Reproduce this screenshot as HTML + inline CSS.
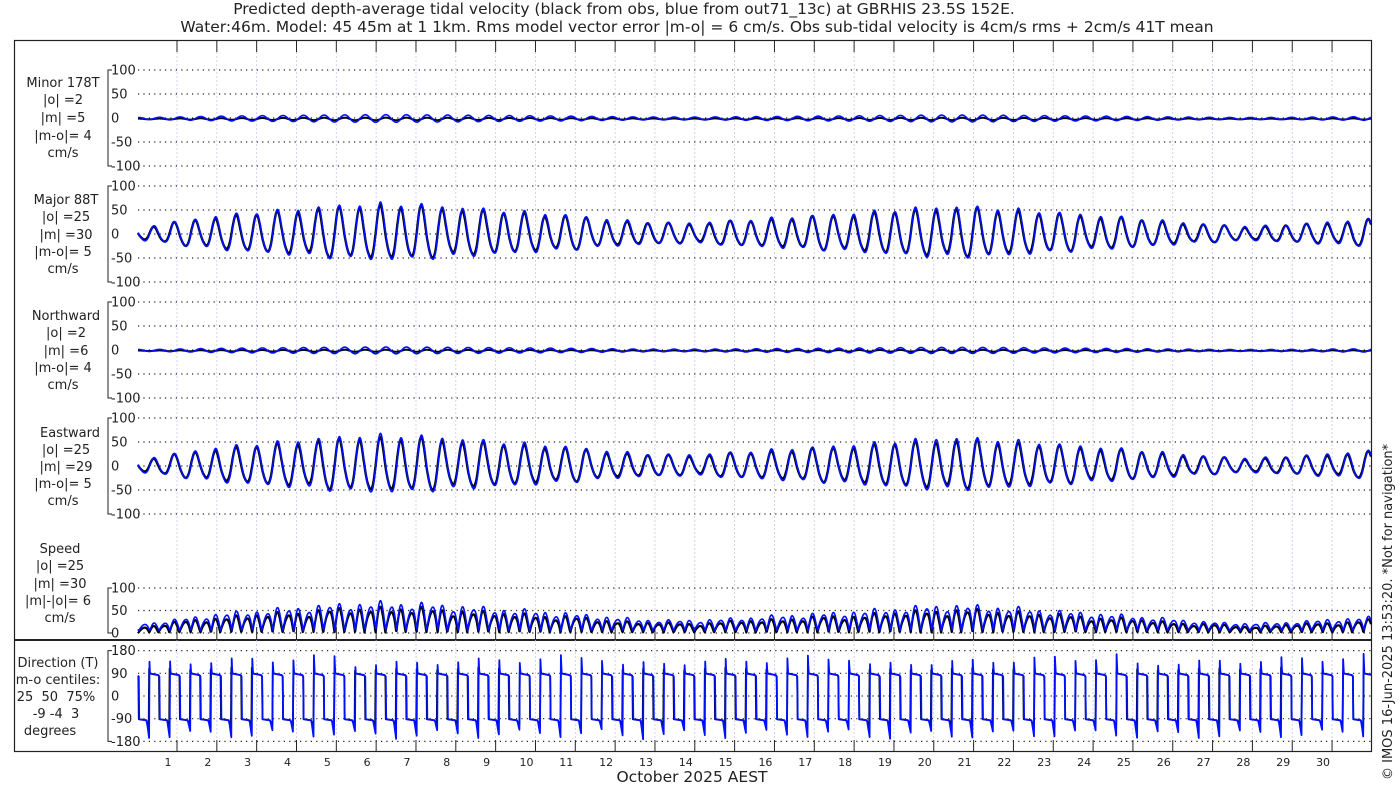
<!DOCTYPE html>
<html><head><meta charset="utf-8"><style>
html,body{margin:0;padding:0;background:#fff;width:1400px;height:800px;overflow:hidden}
svg{display:block}
text{font-family:"DejaVu Sans","Liberation Sans",sans-serif;fill:#222;white-space:pre}
</style></head><body>
<svg id="s" width="1400" height="800" xmlns="http://www.w3.org/2000/svg">
<text x="624" y="14" font-size="15.5" text-anchor="middle">Predicted depth-average tidal velocity (black from obs, blue from out71_13c) at GBRHIS 23.5S 152E.</text>
<text x="697" y="32" font-size="15.5" text-anchor="middle">Water:46m. Model: 45 45m at 1 1km. Rms model vector error |m-o| = 6 cm/s. Obs sub-tidal velocity is 4cm/s rms + 2cm/s 41T mean</text>
<rect x="14.5" y="40.5" width="1357" height="711" fill="none" stroke="#222" stroke-width="1.2"/>
<line x1="14" y1="640" x2="1372" y2="640" stroke="#222" stroke-width="2"/>
<g id="grid"></g>
<g id="data" fill="none"></g>
<g font-size="13" text-anchor="middle">
<text x="63" y="87">Minor 178T</text><text x="63" y="104">|o| =2</text><text x="63" y="122">|m| =5</text><text x="63" y="140">|m-o|= 4</text><text x="63" y="157">cm/s</text>
<text x="66" y="204">Major 88T</text><text x="66" y="221">|o| =25</text><text x="66" y="239">|m| =30</text><text x="63" y="256">|m-o|= 5</text><text x="63" y="273">cm/s</text>
<text x="66" y="320">Northward</text><text x="66" y="337">|o| =2</text><text x="66" y="355">|m| =6</text><text x="63" y="372">|m-o|= 4</text><text x="63" y="389">cm/s</text>
<text x="70" y="437">Eastward</text><text x="66" y="454">|o| =25</text><text x="66" y="471">|m| =29</text><text x="63" y="488">|m-o|= 5</text><text x="63" y="505">cm/s</text>
<text x="60" y="553">Speed</text><text x="60" y="570">|o| =25</text><text x="60" y="588">|m| =30</text><text x="58" y="605">|m|-|o|= 6</text><text x="60" y="622">cm/s</text>
<text x="58" y="667">Direction (T)</text><text x="58" y="684">m-o centiles:</text><text x="56" y="701" xml:space="preserve">25  50  75%</text><text x="56" y="718" xml:space="preserve">-9 -4  3</text><text x="50" y="735">degrees</text>
</g>
<text x="692" y="782" font-size="15.5" text-anchor="middle">October 2025 AEST</text>
<text transform="translate(1392,780) rotate(-90)" font-size="13">© IMOS 16-Jun-2025 13:53:20. *Not for navigation*</text>
<g id="ax" font-size="13"></g>
</svg>
<script>
var NS="http://www.w3.org/2000/svg";
function el(p,t,a,txt){var e=document.createElementNS(NS,t);for(var k in a)e.setAttribute(k,a[k]);if(txt!=null)e.textContent=txt;p.appendChild(e);return e;}
var grid=document.getElementById('grid'),ax=document.getElementById('ax'),data=document.getElementById('data');
var X0=138,X1=1371,DW=39.83;
for(var d=1;d<=30;d++){var x=177+(d-1)*DW;
 el(grid,'line',{x1:x,y1:52,x2:x,y2:740,stroke:'#c8c8f0','stroke-width':0.8,'stroke-dasharray':'2,2'});
 el(grid,'line',{x1:x,y1:40,x2:x,y2:52,stroke:'#222','stroke-width':1});
 el(grid,'line',{x1:x,y1:627,x2:x,y2:640,stroke:'#222','stroke-width':1});
 el(grid,'line',{x1:x,y1:740,x2:x,y2:751,stroke:'#222','stroke-width':1});
 el(ax,'text',{x:x-9,y:766,'text-anchor':'middle','font-size':11},String(d));
}
var panels=[
 {z:118,s:0.48,t:[100,50,0,-50,-100]},
 {z:234,s:0.48,t:[100,50,0,-50,-100]},
 {z:350,s:0.48,t:[100,50,0,-50,-100]},
 {z:466,s:0.48,t:[100,50,0,-50,-100]},
 {z:633,s:0.45,t:[100,50,0]},
 {z:696,s:0.252,t:[180,90,0,-90,-180]}];
panels.forEach(function(p){
 var top=p.z-p.t[0]*p.s,bot=p.z-p.t[p.t.length-1]*p.s;
 el(ax,'path',{d:'M112 '+top+'H108V'+bot+'H112',fill:'none',stroke:'#222','stroke-width':1});
 p.t.forEach(function(v){var y=p.z-v*p.s;
  el(ax,'text',{x:111,y:y+4.5},String(v));
  el(grid,'line',{x1:138,y1:y,x2:1371,y2:y,stroke:'#222','stroke-width':1.2,'stroke-dasharray':'1.2,4.2'});
 });
});
function amp(t){return 40+15*Math.cos(2*Math.PI*(t-6.5)/14.3)-0.4*(t-6.5)+1.5*Math.sin(t*1.3)-14*Math.exp(-Math.pow(t/1.6,2));}
var Tp=12.42/24,N=3000;
function ph(t){return 2*Math.PI*t/Tp+1.3;}
function sig(t,o){var a=amp(t)*(o?0.93:1),p=ph(t)+(o?0.08:0);return a*Math.cos(p)+0.12*a*Math.cos(2*p+0.6)+0.08*a*Math.cos(p/2.0+t)+(o?1.5*Math.sin(t*9):0);}
function minor(t,o){var a=amp(t)*0.14;return (o?-2:-1)+a*Math.sin(ph(t))*(o?0.35:1);}
function path(f,z,s){var d='';for(var i=0;i<=N;i++){var t=i/N*31,x=X0+(X1-X0)*i/N;var y=z-f(t)*s;d+=(i?'L':'M')+x.toFixed(1)+' '+y.toFixed(1);}return d;}
function draw(f,p,col,w){el(data,'path',{d:path(f,p.z,p.s),stroke:col,'stroke-width':w,'stroke-linejoin':'round'});}
var P=panels,B='#0010ff';
draw(function(t){return minor(t,1)},P[0],'#000',2);draw(function(t){return minor(t,0)},P[0],B,1.6);
draw(function(t){return sig(t,1)},P[1],'#000',2.4);draw(function(t){return sig(t,0)},P[1],B,1.6);
draw(function(t){return minor(t,1)*0.8},P[2],'#000',2);draw(function(t){return minor(t,0)*0.9},P[2],B,1.6);
draw(function(t){return sig(t,1)},P[3],'#000',2.4);draw(function(t){return sig(t,0)*1.02},P[3],B,1.6);
draw(function(t){return Math.abs(sig(t,1))*0.95+1},P[4],'#000',2.2);draw(function(t){return Math.abs(sig(t,0))+5},P[4],B,1.6);
function dir(t,o){var p=((ph(t)+(o?0.08:0))%(2*Math.PI)+2*Math.PI)%(2*Math.PI);
 var q=(p+Math.PI/2)%(2*Math.PI);
 var k=(Math.sin(t*3.1)+1)/2;
 if(q<Math.PI){var s=q/Math.PI; var v=90-8*s; if(s<0.08) v+= (1-s/0.08)*(50+30*k)*(o?0.3:1); if(s>0.9)v-=(s-0.9)*60; return v;}
 var s=(q-Math.PI)/Math.PI; var v=-92-6*s; if(s>0.75) v-=(s-0.75)/0.25*(40+35*k)*(o?0.4:1); return v;}
draw(function(t){return dir(t,1)},P[5],'#000',1.8);draw(function(t){return dir(t,0)},P[5],B,1.8);
</script>
</body></html>
